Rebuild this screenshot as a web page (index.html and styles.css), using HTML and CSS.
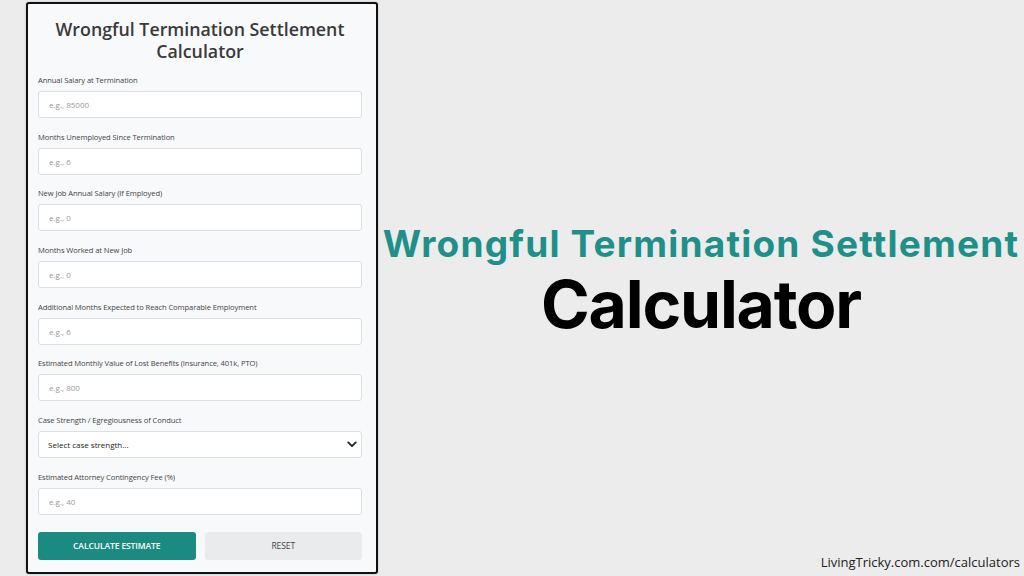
FILE: index.html
```html
<!DOCTYPE html>
<html lang="en">
<head>
<meta charset="utf-8">
<title>Wrongful Termination Settlement Calculator</title>
<link rel="stylesheet" href="styles.css">
</head>
<body>
<div class="page">
  <form class="card">
    <h1 class="card-title">Wrongful Termination Settlement Calculator</h1>
    <div class="field">
      <label class="label">Annual Salary at Termination</label>
      <input class="input" type="text" placeholder="e.g., 85000">
    </div>
    <div class="field">
      <label class="label">Months Unemployed Since Termination</label>
      <input class="input" type="text" placeholder="e.g., 6">
    </div>
    <div class="field">
      <label class="label">New Job Annual Salary (If Employed)</label>
      <input class="input" type="text" placeholder="e.g., 0">
    </div>
    <div class="field">
      <label class="label">Months Worked at New Job</label>
      <input class="input" type="text" placeholder="e.g., 0">
    </div>
    <div class="field">
      <label class="label">Additional Months Expected to Reach Comparable Employment</label>
      <input class="input" type="text" placeholder="e.g., 6">
    </div>
    <div class="field">
      <label class="label">Estimated Monthly Value of Lost Benefits (Insurance, 401k, PTO)</label>
      <input class="input" type="text" placeholder="e.g., 800">
    </div>
    <div class="field">
      <label class="label">Case Strength / Egregiousness of Conduct</label>
      <div class="select">
        <span class="select-text">Select case strength...</span>
        <svg class="chevron" viewBox="0 0 12 8" width="10" height="7"><path d="M1.5 1.5 L6 6 L10.5 1.5" fill="none" stroke="#222" stroke-width="2.2" stroke-linecap="round" stroke-linejoin="round"/></svg>
      </div>
    </div>
    <div class="field">
      <label class="label">Estimated Attorney Contingency Fee (%)</label>
      <input class="input" type="text" placeholder="e.g., 40">
    </div>
    <div class="buttons">
      <button type="button" class="btn btn-primary">CALCULATE ESTIMATE</button>
      <button type="button" class="btn btn-secondary">RESET</button>
    </div>
  </form>
  <div class="hero">
    <div class="hero-text">
      <div class="hero-line1">Wrongful Termination Settlement</div>
      <div class="hero-line2">Calculator</div>
    </div>
    <div class="footer">LivingTricky.com.com/calculators</div>
  </div>
</div>
</body>
</html>
```
FILE: styles.css
```css
* { box-sizing: border-box; }
html, body { margin: 0; padding: 0; }
body {
  background: #ececec;
  width: 1024px;
  height: 576px;
  overflow: hidden;
  font-family: "Open Sans", "Noto Sans", sans-serif;
}
.page {
  display: flex;
  height: 576px;
}
.card {
  margin: 2px 0 0 26px;
  width: 352px;
  height: 572px;
  border: 2px solid #111;
  border-radius: 3px;
  background: #f8f9fa;
  box-shadow: 0 0 2px rgba(0,0,0,0.25);
  padding: 14px 14px 0 10px;
  display: flex;
  flex-direction: column;
}
.card-title {
  margin: 0 0 13px 0;
  text-align: center;
  font-size: 17.8px;
  line-height: 22px;
  font-weight: 600;
  color: #3a3a3a;
}
.field {
  display: flex;
  flex-direction: column;
  margin-bottom: 13.7px;
}
.label {
  font-size: 7.6px;
  line-height: 10px;
  color: #444;
  margin-bottom: 6px;
  letter-spacing: -0.1px;
}
.input, .select {
  height: 27px;
  border: 1px solid #dcdfe3;
  border-radius: 3px;
  background: #fff;
  padding: 0 10px;
  font-family: inherit;
  font-size: 8px;
  color: #222;
  outline: none;
}
.input::placeholder { color: #9a9a9a; }
.select {
  display: flex;
  align-items: center;
  justify-content: space-between;
  padding: 0 4px 0 9px;
}
.select-text { font-size: 8px; color: #222; }
.chevron { display: block; }
.buttons {
  display: flex;
  gap: 9px;
  margin-top: 3px;
}
.btn {
  flex: 1;
  height: 28px;
  border: none;
  border-radius: 3px;
  font-family: inherit;
  font-size: 8.5px;
  font-weight: 600;
  letter-spacing: -0.1px;
}
.btn-primary { background: #1b8a80; color: #fff; }
.btn-secondary { background: #e9ebed; color: #444; font-weight: 500; }
.hero {
  flex: 1;
  display: flex;
  flex-direction: column;
  align-items: center;
}
.hero-text {
  margin-top: 222px;
  text-align: center;
  font-family: Inter, "Noto Sans", sans-serif;
  font-weight: 700;
}
.hero-line1 {
  color: #1f9089;
  font-size: 37px;
  line-height: 44px;
  letter-spacing: 1.2px;
  white-space: nowrap;
}
.hero-line2 {
  color: #000;
  font-size: 66px;
  line-height: 76px;
  letter-spacing: -1.2px;
}
.footer {
  margin-top: auto;
  align-self: flex-end;
  margin-right: 4px;
  margin-bottom: 5px;
  font-size: 13px;
  color: #222;
}
```
